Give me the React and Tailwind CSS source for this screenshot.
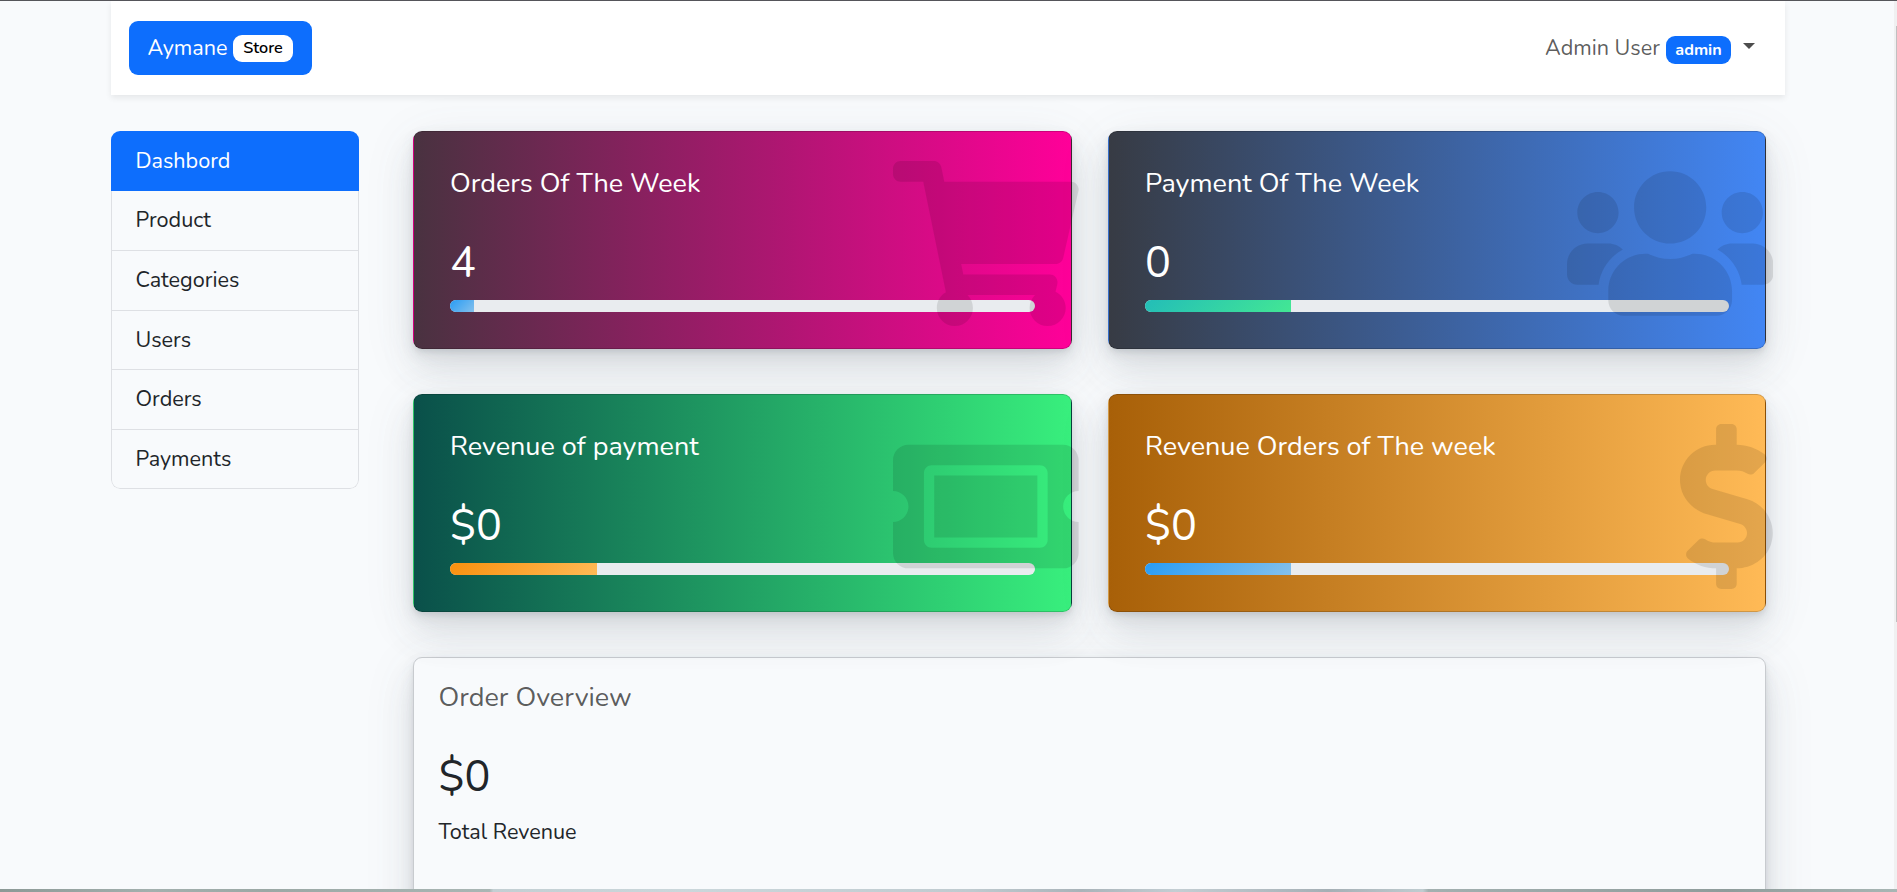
import { FaShoppingCart, FaUsers, FaTicketAlt, FaDollarSign } from "react-icons/fa";

const elevated =
  "shadow-[0_11.25px_52.5px_rgba(90,97,105,0.1),0_22.5px_33.75px_rgba(90,97,105,0.1),0_6px_12.75px_rgba(90,97,105,0.12),0_3px_4.5px_rgba(90,97,105,0.1)]";

const menu = ["Product", "Categories", "Users", "Orders", "Payments"];

const stats = [
  {
    title: "Orders Of The Week",
    value: "4",
    width: "4.1%",
    bg: "bg-[linear-gradient(to_right,#493240,#ff0099)]",
    bar: "bg-[linear-gradient(135deg,#289cf5,#84c0ec)]",
    Icon: FaShoppingCart,
    iconSize: "w-[185.6px]",
  },
  {
    title: "Payment Of The Week",
    value: "0",
    width: "25%",
    bg: "bg-[linear-gradient(to_right,#373b44,#4286f4)]",
    bar: "bg-[linear-gradient(135deg,#23bdb8,#43e794)]",
    Icon: FaUsers,
    iconSize: "w-[206.3px]",
  },
  {
    title: "Revenue of payment",
    value: "$0",
    width: "25.1%",
    bg: "bg-[linear-gradient(to_right,#0a504a,#38ef7d)]",
    bar: "bg-[linear-gradient(135deg,#f9900e,#ffba56)]",
    Icon: FaTicketAlt,
    iconSize: "w-[185.6px]",
  },
  {
    title: "Revenue Orders of The week",
    value: "$0",
    width: "25%",
    bg: "bg-[linear-gradient(to_right,#a86008,#ffba56)]",
    bar: "bg-[linear-gradient(135deg,#289cf5,#84c0ec)]",
    Icon: FaDollarSign,
    iconSize: "w-[92.8px]",
  },
];

function StatCard({ title, value, width, bg, bar, Icon, iconSize }) {
  return (
    <section
      className={`relative h-[218px] rounded-[9px] border border-black/[0.175] px-[36px] pt-[32px] text-white ${bg} ${elevated}`}
    >
      <h2 className="h-[40px] whitespace-nowrap text-[27px] leading-[40px]">{title}</h2>
      <p className="mt-[32px] h-[54px] text-[43.2px] leading-[54px]">{value}</p>
      <div className="mt-[10px] h-[12px] overflow-hidden rounded-full bg-[#e9ecef]">
        <div className={`h-full ${bar}`} style={{ width }} />
      </div>
      <Icon className={`absolute -right-[8px] top-[29.25px] h-[165px] text-black opacity-10 ${iconSize}`} />
    </section>
  );
}

export default function App() {
  return (
    <div className="relative h-[892px] overflow-hidden border-t border-[#55555a] bg-[#f8fafc] font-[Nunito,Lato,sans-serif] text-[21.6px] text-[#212529]">
      <header className="ml-[111px] flex h-[94px] w-[1674px] items-center justify-between bg-white pl-[18px] pr-[30px] shadow-[0_3px_6px_rgba(0,0,0,0.075)]">
        <a className="flex h-[54px] w-[183px] items-center justify-between rounded-[9px] bg-[#0d6efd] pl-[18.5px] pr-[19px] text-white">
          <span>Aymane</span>
          <span className="flex h-[27px] w-[60px] items-center justify-center rounded-[9px] bg-white text-[16.2px] font-semibold text-black">
            Store
          </span>
        </a>
        <div className="flex items-center text-black/65">
          <span className="w-[121px] whitespace-nowrap">Admin User</span>
          <span className="mt-[4px] flex h-[28px] w-[65px] items-center justify-center rounded-[9px] bg-[#0d6efd] text-[16.2px] font-bold text-white">
            admin
          </span>
          <span className="-mt-[4px] ml-[12px] border-x-[6px] border-t-[6px] border-x-transparent border-t-[#4d4d4d]" />
        </div>
      </header>

      <div className="ml-[111px] mt-[36px] flex items-start gap-[54px]">
        <nav className="w-[248px] overflow-hidden rounded-[9px]">
          <a className="flex h-[60px] items-center bg-[#0d6efd] pl-[24.5px] text-white">Dashbord</a>
          <div className="rounded-b-[9px] border-x border-b border-[#dee0e4]">
            {menu.map((label, i) => (
              <a
                key={label}
                className={`flex items-center pl-[23.5px] ${i ? "h-[59.5px] border-t border-[#dee0e4]" : "h-[59px]"}`}
              >
                {label}
              </a>
            ))}
          </div>
        </nav>

        <main className="w-[1353px]">
          <div className="grid grid-cols-[659px_658px] gap-x-[36px] gap-y-[45px]">
            {stats.map((s) => (
              <StatCard key={s.title} {...s} />
            ))}
          </div>
          <section
            className={`mt-[45px] h-[420px] rounded-[9px] border border-[#c8cbcf] bg-[#f8fafc] px-[24.5px] pt-[20px] ${elevated}`}
          >
            <h2 className="h-[40px] text-[27px] leading-[40px] text-black/65">Order Overview</h2>
            <p className="mt-[32px] h-[54px] text-[43.2px] leading-[54px]">$0</p>
            <p className="mt-[11px] leading-[34px]">Total Revenue</p>
          </section>
        </main>
      </div>

      <div className="absolute right-0 top-0 h-[888px] w-[3px] bg-[#f0f0f1]">
        <div className="ml-[2px] mt-[25px] h-[596px] w-px bg-[#c0c0c1]" />
      </div>
      <div className="absolute inset-x-0 bottom-0 h-[3px] bg-[linear-gradient(to_right,#8c9996_0%,#a3b0ae_8%,#9ba8a5_14%,#a9b6b4_25.8%,#c3cfd3_26%,#cbd7db_36%,#c0cbd0_51%,#a9b3b9_57%,#c4ced3_62%,#a5afb5_70%,#c0ccd0_75%,#a3b0b0_75.3%,#8f9c9b_91%,#a8b6b4_100%)]" />
    </div>
  );
}
